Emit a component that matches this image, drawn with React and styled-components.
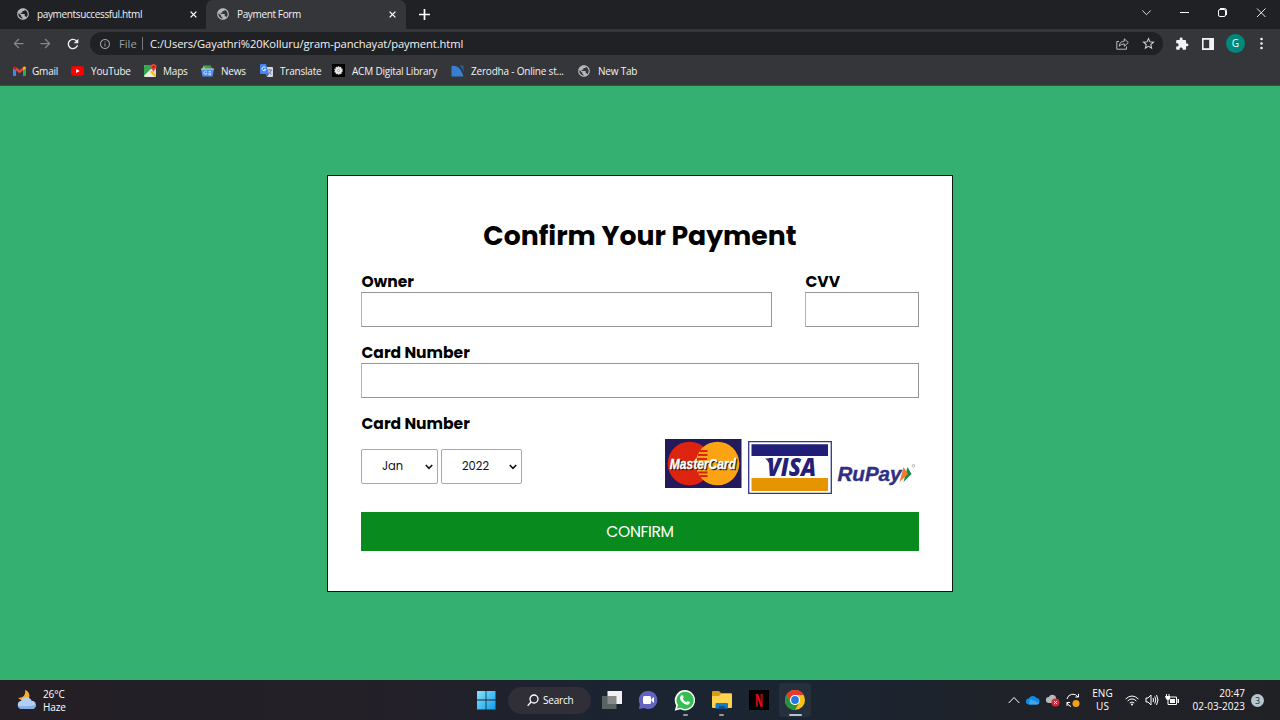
import React from 'react';
import styled, { createGlobalStyle } from 'styled-components';
import { MdPublic, MdExtension, MdInfoOutline, MdStarBorder, MdRefresh, MdArrowBack, MdArrowForward } from 'react-icons/md';

const Global = createGlobalStyle`
  * { box-sizing: border-box; }
  body { margin: 0; overflow: hidden; background: #34b071; }
  svg { display: block; flex: none; overflow: visible; }
`;

const Desktop = styled.div`
  width: 1280px;
  height: 720px;
  display: flex;
  flex-direction: column;
  font-family: 'Open Sans', 'Noto Sans', sans-serif;
`;

/* Browser chrome */
const TabStrip = styled.div`
  height: 29px;
  flex: none;
  background: #202124;
  display: flex;
  align-items: stretch;
`;
const Tab = styled.div`
  width: ${p => p.$width}px;
  height: 29px;
  padding: 0 ${p => p.$right}px 1px ${p => p.$left}px;
  display: flex;
  align-items: center;
  border-radius: 7px 7px 0 0;
  background: ${p => (p.$active ? '#35363a' : '#202124')};
  color: #f1f3f4;
`;
const TabTitle = styled.span`
  flex: 1;
  margin-left: 8px;
  font-size: 10px;
  line-height: 14px;
  letter-spacing: -0.36px;
  white-space: nowrap;
`;
const NewTab = styled.div`
  padding: 9px 0 0 13px;
  flex: 1;
`;
const WindowControls = styled.div`
  display: flex;
  gap: 28px;
  padding: 7px 14px 0 0;
`;
const Toolbar = styled.div`
  height: 28px;
  flex: none;
  background: #35363a;
  display: flex;
  align-items: center;
  padding: 1px 14px 0 11px;
`;
const NavButtons = styled.div`
  display: flex;
  gap: 12px;
  width: 79px;
`;
const Omnibox = styled.div`
  width: 1073px;
  height: 23px;
  border-radius: 12px;
  background: #202124;
  display: flex;
  align-items: center;
  padding: 0 7px 0 9px;
  font-size: 11.2px;
  color: #f1f3f4;
`;
const Scheme = styled.span`
  width: 24px;
  margin-left: 8px;
  color: #9aa0a6;
  border-right: 1px solid #777b80;
  line-height: 13px;
`;
const Address = styled.span`
  flex: 1;
  margin-left: 7px;
  line-height: 14px;
  white-space: nowrap;
  letter-spacing: -0.09px;
`;
const OmniActions = styled.div`
  display: flex;
  gap: 12px;
  align-items: center;
`;
const Extensions = styled.div`
  flex: 1;
  display: flex;
  align-items: center;
  padding-left: 12px;
  gap: 13px;
`;
const Avatar = styled.span`
  width: 19px;
  height: 19px;
  margin: 0 -1px;
  border-radius: 50%;
  background: #00897b;
  color: #fff;
  font-size: 10px;
  line-height: 19px;
  text-align: center;
`;
const BookmarkBar = styled.div`
  height: 29px;
  flex: none;
  background: #35363a;
  border-bottom: 1px solid #3a5148;
  display: flex;
  align-items: center;
  padding: 0 0 1px 13px;
`;
const Bookmark = styled.div`
  width: ${p => p.$width}px;
  display: flex;
  align-items: center;
  gap: ${p => p.$gap || 7}px;
  font-size: 10px;
  letter-spacing: -0.2px;
  color: #f1f3f4;
  white-space: nowrap;
`;

/* Payment page */
const Page = styled.main`
  flex: 1;
  background: #34b071;
  padding-top: 89px;
  font-family: 'Poppins', sans-serif;
  color: #000;
`;
const Card = styled.form`
  width: 626px;
  height: 417px;
  margin: 0 auto;
  padding: 39px 33px 0;
  border: 1px solid #101a14;
  background: #fff;
`;
const Heading = styled.h1`
  margin: 0;
  height: 57px;
  font-size: 26.7px;
  font-weight: 700;
  line-height: 42px;
  text-align: center;
  white-space: nowrap;
`;
const FieldRow = styled.div`
  display: flex;
  gap: 33px;
  height: 71px;
`;
const Field = styled.div`
  width: ${p => p.$width}px;
`;
const Label = styled.label`
  display: block;
  height: 20px;
  padding-left: 0.5px;
  font-size: 15.55px;
  font-weight: 700;
  line-height: 19px;
`;
const Input = styled.input`
  display: block;
  width: 100%;
  height: 35px;
  border: 1px solid #969696;
  border-left-color: #b4b4b4;
  background: #fff;
  outline: 0;
`;
const ExpiryRow = styled.div`
  display: flex;
  height: 78px;
  padding-top: 5px;
`;
const Picker = styled.div`
  width: ${p => p.$width}px;
  height: 35px;
  margin: 10px 3px 0 0;
  padding: 0 4px 0 20px;
  border: 1px solid #a8a8a8;
  border-radius: 2px;
  display: flex;
  align-items: center;
  justify-content: space-between;
  font-size: 11.5px;
  color: #111;
`;
const Brands = styled.div`
  display: flex;
  align-items: flex-start;
  margin-left: auto;
  gap: 6px;
`;
const Brand = styled.div`
  margin-top: ${p => p.$drop}px;
`;
const Confirm = styled.button`
  display: block;
  width: 558px;
  height: 39px;
  padding: 0;
  border: 0;
  background: #088a1e;
  color: #fff;
  font: 400 15.6px/39px 'Poppins', sans-serif;
  letter-spacing: -0.35px;
`;

/* Taskbar */
const Taskbar = styled.footer`
  height: 40px;
  flex: none;
  display: flex;
  align-items: center;
  background: linear-gradient(90deg, #241f25 0%, #231f28 30%, #1c2431 48%, #1b2532 63%, #1f2229 78%, #202125 100%);
  color: #fff;
`;
const Weather = styled.div`
  width: 476px;
  padding-left: 16px;
  display: flex;
  align-items: center;
  gap: 5px;
  font-size: 10px;
  line-height: 13px;
  letter-spacing: -0.1px;
`;
const WeatherText = styled.div`
  padding-top: 1px;
`;
const Apps = styled.div`
  width: 532px;
  display: flex;
  align-items: center;
`;
const Search = styled.div`
  width: 83px;
  height: 27px;
  margin: 0 7px 0 12px;
  padding-left: 19px;
  border-radius: 14px;
  background: #302f38;
  display: flex;
  align-items: center;
  gap: 4px;
  font-size: 10px;
  letter-spacing: -0.2px;
`;
const AppSlot = styled.div`
  width: ${p => p.$width}px;
  height: 34px;
  margin-left: ${p => p.$gap || 0}px;
  border-radius: 3px;
  background: ${p => (p.$focused ? '#25303c' : 'transparent')};
  display: flex;
  flex-direction: column;
  align-items: center;
  padding-top: 7px;
`;
const Running = styled.span`
  width: ${p => (p.$wide ? 13 : 5)}px;
  height: 2px;
  margin-top: auto;
  margin-bottom: 1px;
  border-radius: 1px;
  background: ${p => (p.$wide ? '#a9c5d4' : '#98999d')};
`;
const Tray = styled.div`
  flex: 1;
  display: flex;
  align-items: center;
  font-size: 10px;
  line-height: 13px;
`;
const TrayIcons = styled.div`
  display: flex;
  align-items: center;
  gap: 6px;
`;
const Language = styled.div`
  width: 45px;
  text-align: center;
`;
const Clock = styled.div`
  width: 66px;
  text-align: right;
  white-space: nowrap;
  letter-spacing: 0.04px;
`;
const Badge = styled.span`
  width: 13px;
  height: 13px;
  margin-left: 6px;
  border-radius: 50%;
  background: #b4c8d1;
  color: #222b33;
  font-size: 9px;
  line-height: 13px;
  text-align: center;
`;

const PublicIcon = styled(MdPublic)`
  margin: 0 -1px;
  color: #b4b8bc;
`;
const Globe = () => <PublicIcon size={14} />;
const Cross = () => (
  <svg width="7" height="7" viewBox="0 0 8 8" stroke="#fff" strokeWidth="1.500"><path d="M.7.7 7.3 7.3M7.3.7.7 7.3" /></svg>
);
const Gmail = () => (
  <svg width="13" height="10" viewBox="0 0 13 10">
    <path fill="#4285f4" d="M0 2v7q0 1 1 1h2V4z" /><path fill="#34a853" d="M13 2v7q0 1-1 1h-2V4z" />
    <path fill="#c5221f" d="M0 2q0-2 2-1.5L3 1.2v3.3L0 2.3z" /><path fill="#fbbc04" d="M13 2q0-2-2-1.500l-1 .7v3.300l3-2.200z" />
    <path fill="#ea4335" d="M3 1.200 6.500 4 10 1.200v3.300L6.500 7.200 3 4.500z" />
  </svg>
);
const YouTube = () => (
  <svg width="13" height="10" viewBox="0 0 14 10"><rect width="14" height="10" rx="2.600" fill="#f00" /><path d="M5.500 2.800v4.400L9.300 5z" fill="#fff" /></svg>
);
const Maps = () => (
  <svg width="13" height="13" viewBox="0 0 13 13">
    <rect y="1" width="12" height="12" rx="1.500" fill="#d9dde0" />
    <path d="M0 3q0-2 2-2h5L8 4 0 12z" fill="#34a853" /><path d="M2 13 7 7l5 5-1 1z" fill="#e8eaed" />
    <path d="M0 12 8 4l1 2-7 7z" fill="#f5edd4" /><path d="m6 8 1.500-1.500L12 11.500 11 13z" fill="#fbbc04" />
    <path d="M9.500 0C7.500 0 6.400 1.400 6.400 3c0 2 2.500 2.600 3.100 5 .6-2.400 3.100-3 3.100-5 0-1.600-1.100-3-3.100-3z" fill="#ea4335" /><circle cx="9.500" cy="3" r="1.100" fill="#891b13" />
  </svg>
);
const News = () => (
  <svg width="13" height="12" viewBox="0 0 13 12">
    <path fill="#34a853" d="M2 .5h8v4H2z" /><path fill="#ea4335" d="m8 1.500 3.500 1-1 3-2.500-1z" /><path fill="#fbbc04" d="m1.500 2.500 2-1v3h-2z" />
    <path d="M0 4h13l-1.300 7q-.1.500-.7.500H2q-.6 0-.7-.5z" fill="#4f8def" /><path fill="#a9c7f5" d="M0 3.500h13l-.2 1.300H.2z" />
    <path d="M5.700 6.700a1.600 1.600 0 1 0 .3 1.600H4.700M7.500 6.700H10M7.500 8.300H10M7.500 9.700H10" fill="none" stroke="#e8f0fe" strokeWidth=".8" />
  </svg>
);
const TranslateIcon = () => (
  <svg width="13" height="13" viewBox="0 0 13 13">
    <path d="M5 3h7q1 0 1 1v8q0 1-1 1H7z" fill="#d6dae0" /><path d="M1 0h5l3 10H1q-1 0-1-1V1q0-1 1-1z" fill="#4285f4" />
    <path d="M5.500 3.700A1.900 1.900 0 1 0 5.800 5.300H4.200" fill="none" stroke="#fff" strokeWidth=".9" /><path d="M8 6h4M10 5v1M11.400 6q-.8 2.700-3 4M9 7.500l2.500 3" stroke="#607080" strokeWidth=".8" fill="none" /><path d="m6.500 10 2.500 0-2 3z" fill="#3367d6" />
  </svg>
);
const Acm = () => (
  <svg width="13" height="13" viewBox="0 0 13 13"><path fill="#000" d="M0 0h13v13H0z" /><circle cx="6.500" cy="6.500" r="3.500" fill="#eee" stroke="#ddd" strokeWidth="1.500" strokeDasharray="1.400 .8" /><circle cx="6.500" cy="6.500" r="1.200" fill="none" stroke="#888" strokeWidth=".6" /></svg>
);
const Zerodha = () => (
  <svg width="13" height="12" viewBox="0 0 13 12"><path d="M.5 1q4-1.200 7 1.500t5 9H.5z" fill="#387ed1" /><path d="M8.500.5h4V7Q11.500 2.500 8.500.5z" fill="#26639f" /></svg>
);

const MasterCard = () => (
  <svg width="77" height="49" viewBox="0 0 77 49">
    <path d="M0 0h76.500v49H0z" fill="#231a5b" /><circle cx="24.500" cy="24.500" r="21.800" fill="#dc2410" /><circle cx="52.500" cy="24.500" r="21.800" fill="#fba313" />
    <path d="M34.500 12h8M33 16h9.500M32 20h10M32 29.500h10M33 33.500h9.500M34.500 37h8" stroke="#dc2410" strokeWidth="1.800" />
    <text x="5.800" y="31.300" fontFamily="Liberation Sans" fontWeight="700" fontStyle="italic" fontSize="15" textLength="66" lengthAdjust="spacingAndGlyphs" fill="#241717" stroke="#241717" strokeWidth=".5">MasterCard</text>
    <text x="4.800" y="30.300" fontFamily="Liberation Sans" fontWeight="700" fontStyle="italic" fontSize="15" textLength="66" lengthAdjust="spacingAndGlyphs" fill="#fff" stroke="#fff" strokeWidth=".35">MasterCard</text>
  </svg>
);
const Visa = () => (
  <svg width="84" height="53" viewBox="0 0 84 53">
    <path d="M.7.7h82.600v51.600H.7z" fill="#fff" stroke="#34348e" strokeWidth="1.300" /><path d="M3.500 3.200h76.500V15H3.500z" fill="#201e78" /><path d="M3.500 37h76.500v13H3.500z" fill="#e59500" />
    <path d="m17 17.500 5 0-1.500 4.500q-.3-3-3.500-4.500z" fill="#201e78" />
    <text x="19" y="34.800" fontFamily="Open Sans" fontWeight="800" fontStyle="italic" fontSize="24.500" textLength="49" lengthAdjust="spacingAndGlyphs" fill="#242078">VISA</text>
  </svg>
);
const RuPay = () => (
  <svg width="81" height="24" viewBox="0 0 81 24">
    <text x="-.5" y="15.500" fontFamily="Liberation Sans" fontWeight="700" fontStyle="italic" fontSize="20" textLength="64" lengthAdjust="spacingAndGlyphs" fill="#302f83" stroke="#302f83" strokeWidth=".4">RuPay</text>
    <path d="m69.500 2 4 7-8 8z" fill="#128a45" /><path d="m65.500 2 4.500 7-8.500 8z" fill="#f47a30" />
    <circle cx="75.500" cy=".8" r="1.300" fill="none" stroke="#888" strokeWidth=".6" />
  </svg>
);

const Chevron = () => <svg width="8" height="6" viewBox="0 0 8 6"><path d="m.8 1 3.200 3.300L7.200 1" fill="none" stroke="#111" strokeWidth="1.600" /></svg>;
const WeatherIcon = () => (
  <svg width="22" height="22" viewBox="0 0 22 22">
    <path d="M9 1c4 1 6 6 3 10l-7 0-3-2c5 0 8-3 7-8z" fill="#f5ae31" />
    <path d="M5.500 20a4.200 4.200 0 0 1-.3-8.300 5.600 5.600 0 0 1 10.400 0A4.200 4.200 0 0 1 16.500 20z" fill="#b4cff6" /><path d="M2 17q9 1 18-1-1 4-4 4H5.500Q3 20 2 17z" fill="#88aee8" />
  </svg>
);
const Windows = () => (
  <svg width="20" height="20" viewBox="0 0 20 20"><defs><linearGradient id="win" x2="1" y2="1"><stop stopColor="#86e3fb" /><stop offset="1" stopColor="#0e9cef" /></linearGradient></defs><path d="M1 1h8.600v8.600H1zM10.400 1H19.500v8.600h-9.100zM1 10.400h8.600V19.500H1zM10.400 10.400h9.100v9.100h-9.100z" fill="url(#win)" /></svg>
);
const TaskView = () => <svg width="20" height="20" viewBox="0 0 20 20"><path d="M5.500 1H20V14H5.500z" fill="#f1f1f1" /><path d="M0 6h14.500V19H0z" fill="#6d716f" fillOpacity=".8" /></svg>;
const Chat = () => <svg width="20" height="20" viewBox="0 0 20 20"><path d="M10.500 1a9 9 0 1 1-4.300 17L1 19l.8-5A9 9 0 0 1 10.500 1z" fill="#6264bf" /><rect x="5" y="6" width="8" height="8" rx="1.500" fill="#fff" /><path d="m13.500 9 2.500-2v6l-2.500-2z" fill="#fff" /></svg>;
const WhatsApp = () => (
  <svg width="22" height="21" viewBox="0 0 22 21"><path d="M11 0a10.200 10.200 0 1 1-4.700 19.300L.7 20.800l1.500-5.400A10.200 10.200 0 0 1 11 0z" fill="#f5fbf6" /><path d="M11 1.700a8.600 8.600 0 1 1-4.300 16L3 18.600l1-3.600a8.600 8.600 0 0 1 7-13.300z" fill="#37bd51" /><path d="M7.800 5.300c.6-.2 1 0 1.300.7l.6 1.500-.9 1.200c.8 1.700 1.900 2.700 3.600 3.500l1.200-1.300 2.300 1.100c0 2-1.500 2.900-3 2.700-3.800-.6-6.800-4-6.900-6.900 0-1.100.8-2.200 1.800-2.500z" fill="#fff" /></svg>
);
const Folder = () => <svg width="20" height="20" viewBox="0 0 20 20"><path d="M0 2q0-1 1-1h6l2 2h10q1 0 1 1v6H0z" fill="#d99a18" /><path d="M0 6h7l2-2h10q1 0 1 1v12q0 1-1 1H1q-1 0-1-1z" fill="#ffd34e" /><path d="M4.500 13H15q1 0 1 1v4.500H3.500V14q0-1 1-1z" fill="#127ccc" /><path d="M7 16h6v2.500H7z" fill="#0b4f8e" /></svg>;
const Netflix = () => <svg width="20" height="20" viewBox="0 0 20 20"><path fill="#000" d="M0 0h20v20H0z" /><path fill="#b1060f" d="M6.800 4h2.200v12.500l-2.200.3zM11.500 4h2.200v12.800l-2.200-.3z" /><path fill="#e50914" d="M6.800 4h2.300l4.600 12.800-2.300-.3z" /></svg>;
const Chrome = () => (
  <svg width="20" height="20" viewBox="0 0 20 20"><circle cx="10" cy="10" r="10" fill="#fbc116" /><path d="M1.340 5A10 10 0 0 1 18.660 5H10a5 5 0 0 0-4.300 7.500z" fill="#e33b2e" /><path d="M1.340 5A10 10 0 0 0 10 20l4.300-7.500a5 5 0 0 1-8.600 0z" fill="#229342" /><circle cx="10" cy="10" r="5" fill="#fff" /><circle cx="10" cy="10" r="3.900" fill="#2378e8" /></svg>
);

const bookmarks = [
  { name: 'Gmail', icon: <Gmail />, width: 58, gap: 6 },
  { name: 'YouTube', icon: <YouTube />, width: 73 },
  { name: 'Maps', icon: <Maps />, width: 57, gap: 6 },
  { name: 'News', icon: <News />, width: 59 },
  { name: 'Translate', icon: <TranslateIcon />, width: 72 },
  { name: 'ACM Digital Library', icon: <Acm />, width: 119 },
  { name: 'Zerodha - Online st...', icon: <Zerodha />, width: 127 },
  { name: 'New Tab', icon: <Globe />, width: 80, gap: 8 },
];

function BrowserChrome() {
  return (
    <>
      <TabStrip>
        <Tab $width={206} $left={17} $right={9}><Globe /><TabTitle>paymentsuccessful.html</TabTitle><Cross /></Tab>
        <Tab $active $width={200} $left={11} $right={10}><Globe /><TabTitle>Payment Form</TabTitle><Cross /></Tab>
        <NewTab><svg width="11" height="11" viewBox="0 0 11 11" stroke="#fff" strokeWidth="1.700"><path d="M5.500 0v11M0 5.500h11" /></svg></NewTab>
        <WindowControls>
          <svg width="10" height="11" viewBox="0 0 10 11" fill="none" stroke="#ddd"><path d="m.3 3.500 4.200 4.200 4.200-4.200" /></svg>
          <svg width="10" height="11" viewBox="0 0 10 11" stroke="#fff"><path d="M0 5.500h9" /></svg>
          <svg width="10" height="11" viewBox="0 0 10 11" fill="none" stroke="#fff"><rect x=".5" y="2.500" width="7" height="7" rx="1.500" /><path d="M2 1.500h4.500q2 0 2 2v4.500" /></svg>
          <svg width="10" height="11" viewBox="0 0 10 11" stroke="#fff" strokeWidth=".9"><path d="m1 1.500 8.500 8.500M9.500 1.500 1 10" /></svg>
        </WindowControls>
      </TabStrip>
      <Toolbar>
        <NavButtons><MdArrowBack size={15} color="#85888c" /><MdArrowForward size={15} color="#85888c" /><MdRefresh size={16} color="#eceef0" /></NavButtons>
        <Omnibox>
          <MdInfoOutline size={12} color="#9aa0a6" />
          <Scheme>File</Scheme>
          <Address>C:/Users/Gayathri%20Kolluru/gram-panchayat/payment.html</Address>
          <OmniActions>
            <svg width="13" height="13" viewBox="0 0 13 13" fill="none" stroke="#b9bcc0"><path d="M3 4.500H.8v7.700h9.700V9.500" /><path d="M3.300 9.200q.4-5 5-5V1.800l4 3.800-4 3.700V6.900q-3.200 0-5 2.300z" /></svg>
            <MdStarBorder size={15} color="#d5d8dc" />
          </OmniActions>
        </Omnibox>
        <Extensions>
          <MdExtension size={14} color="#f1f3f4" />
          <svg width="12" height="12" viewBox="0 0 12 12"><path d="M0 0h12v12H0z" fill="#f1f3f4" /><path d="M1.600 1.800h5.600v8.400H1.600z" fill="#35363a" /></svg>
          <Avatar>G</Avatar>
          <svg width="9" height="13" viewBox="0 0 9 13" fill="#f1f3f4"><circle cx="4.500" cy="2" r="1.300" /><circle cx="4.500" cy="6.500" r="1.300" /><circle cx="4.500" cy="11" r="1.300" /></svg>
        </Extensions>
      </Toolbar>
      <BookmarkBar>
        {bookmarks.map(b => <Bookmark key={b.name} $width={b.width} $gap={b.gap}>{b.icon}<span>{b.name}</span></Bookmark>)}
      </BookmarkBar>
    </>
  );
}

function PaymentPage() {
  return (
    <Page>
      <Card>
        <Heading>Confirm Your Payment</Heading>
        <FieldRow>
          <Field $width={411}><Label>Owner</Label><Input /></Field>
          <Field $width={114}><Label>CVV</Label><Input /></Field>
        </FieldRow>
        <FieldRow><Field $width={558}><Label>Card Number</Label><Input /></Field></FieldRow>
        <Label>Card Number</Label>
        <ExpiryRow>
          <Picker $width={77}>Jan<Chevron /></Picker>
          <Picker $width={81}>2022<Chevron /></Picker>
          <Brands>
            <Brand $drop={0}><MasterCard /></Brand>
            <Brand $drop={2}><Visa /></Brand>
            <Brand $drop={26}><RuPay /></Brand>
          </Brands>
        </ExpiryRow>
        <Confirm type="button">CONFIRM</Confirm>
      </Card>
    </Page>
  );
}

function SystemTaskbar() {
  return (
    <Taskbar>
      <Weather><WeatherIcon /><WeatherText>26°C<br />Haze</WeatherText></Weather>
      <Apps>
        <Windows />
        <Search><svg width="12" height="13" viewBox="0 0 12 13" fill="none" stroke="#fff" strokeWidth="1.300"><circle cx="7" cy="5" r="4" /><path d="M4 8 .7 11.800" /></svg>Search</Search>
        <AppSlot $width={28}><TaskView /></AppSlot>
        <AppSlot $width={43}><Chat /></AppSlot>
        <AppSlot $width={32}><WhatsApp /><Running /></AppSlot>
        <AppSlot $width={41}><Folder /><Running /></AppSlot>
        <AppSlot $width={33}><Netflix /></AppSlot>
        <AppSlot $width={32} $gap={4} $focused><Chrome /><Running $wide /></AppSlot>
      </Apps>
      <Tray>
        <TrayIcons>
          <svg width="12" height="8" viewBox="0 0 12 8" fill="none" stroke="#fff"><path d="m.7 7 5.300-5.500L11.300 7" /></svg>
          <svg width="14" height="10" viewBox="0 0 14 10"><path d="M3 9.500a3 3 0 0 1-.2-6A4.500 4.500 0 0 1 10.500 3a3.300 3.300 0 0 1 .5 6.500z" fill="#1389e4" /><path d="m4 4 9 4q-1 1.500-2 1.500H3z" fill="#39a9f1" /></svg>
          <svg width="14" height="13" viewBox="0 0 14 13"><path d="M3 9a3 3 0 0 1-.2-6 4 4 0 0 1 7-.3L11 9z" fill="#b6b8bb" /><circle cx="9.500" cy="8.500" r="4" fill="#d52b36" /><path d="m8 7 3 3m0-3-3 3" stroke="#fff" strokeWidth=".9" /></svg>
          <svg width="14" height="15" viewBox="0 0 14 15" fill="none" stroke="#fff"><path d="M1 6a6 6 0 0 1 11-2M12.500.8V4H9.300M1 9.500a6 6 0 0 0 4 4M1 13v-3.500h3" /><circle cx="10" cy="10.500" r="3.500" fill="#f59e16" stroke="none" /></svg>
        </TrayIcons>
        <Language>ENG<br />US</Language>
        <TrayIcons>
          <svg width="14" height="11" viewBox="0 0 14 11" fill="none" stroke="#fff"><path d="M.6 4Q7-2 13.400 4M2.600 6Q7 1.800 11.400 6M4.700 8Q7 6 9.300 8" /><circle cx="7" cy="9.500" r="1" fill="#fff" stroke="none" /></svg>
          <svg width="14" height="12" viewBox="0 0 14 12" fill="none" stroke="#fff"><path d="M1 4h2l3-3v10L3 8H1zM8 4q1 2 0 4M9.800 2.500q2 3.500 0 7M11.500 1q3 5 0 10" /></svg>
          <svg width="14" height="12" viewBox="0 0 14 12"><path d="M3 3h8.500v7.500H3z" fill="none" stroke="#fff" /><path d="M5 5h5v4H5zM12.500 5H14v4h-1.500zM0 2h5v3Q3 7 1 5zM1 0h1v2H1zM3.500 0h1v2h-1z" fill="#fff" /></svg>
        </TrayIcons>
        <Clock>20:47<br />02-03-2023</Clock>
        <Badge>3</Badge>
      </Tray>
    </Taskbar>
  );
}

export default function App() {
  return <Desktop><Global /><BrowserChrome /><PaymentPage /><SystemTaskbar /></Desktop>;
}
